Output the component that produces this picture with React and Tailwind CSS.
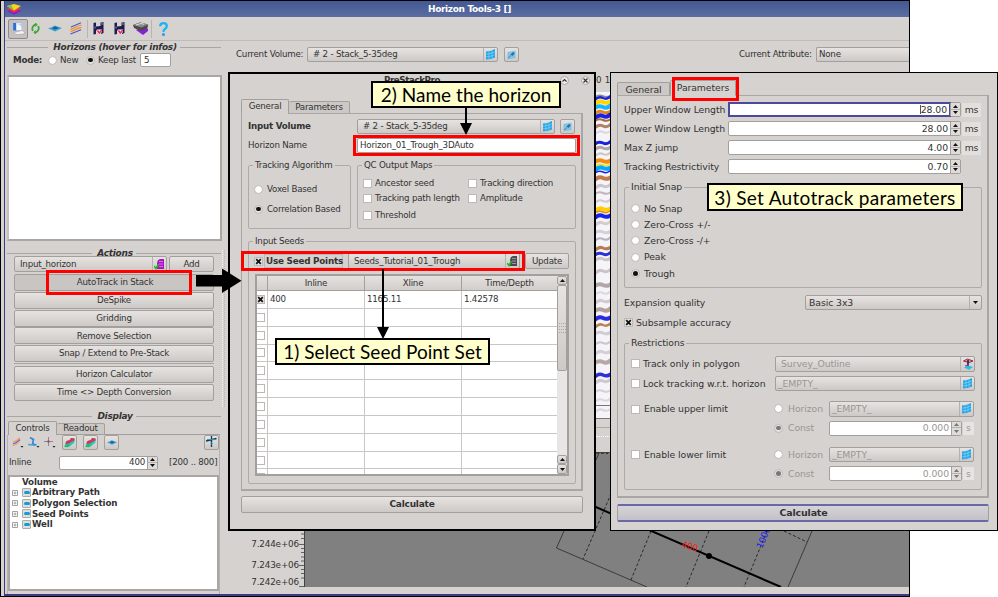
import React from "react";

const cx = (...c) => c.filter(Boolean).join(" ");
const btn = "border border-[#a39f9c] rounded-[2px] bg-gradient-to-b from-[#e6e3e1] to-[#cdc9c6]";

/* ---------- small drawings ---------- */
const Logo = () => (
  <svg width="14" height="13" viewBox="0 0 14 13">
    <path d="M0 8l7-3 7 3-7 4z" fill="#8a22c8" />
    <path d="M0 5.500l7-3 7 3-7 4z" fill="#f03a3a" />
    <path d="M0 3l7-2 7 2-7 4.500z" fill="#f7d51d" />
    <path d="M0 3l4-1.200 3 5.700z" fill="#7cc243" />
  </svg>
);
const ViewIcon = () => (
  <svg width="13" height="13" viewBox="0 0 13 13">
    <path d="M1 0.500h8.500l.5 8H1.500z" fill="#f5f8ff" stroke="#9fb4d8" strokeWidth=".7" />
    <path d="M1.200 1h3v7.500h-3z" fill="#2f6fd0" />
    <path d="M5 1.500h4.500v3z" fill="#b9d2f4" />
    <path d="M2 10.500l8-2 2.500 1.500-.5 2-8 .5z" fill="#f4f4f4" stroke="#a5a5a5" strokeWidth=".6" />
    <path d="M10 3.500l1.500 5" stroke="#c2c8d4" strokeWidth="1.200" />
  </svg>
);
const RefreshIcon = () => (
  <svg width="9" height="11" viewBox="0 0 9 11" fill="none" stroke="#3fa535" strokeWidth="1.800">
    <path d="M1.800 8C.5 5 2 1.500 5.500 1.500M3.500 9.500C7 9.500 8.500 6 7.200 3" />
    <path d="M4 .2L6.200 1.600 4.500 3.500M5 10.800L2.800 9.400 4.500 7.500" strokeWidth="1" />
  </svg>
);
const Surface = ({ w = 14 }) => (
  <svg width={w} height={w * 0.5} viewBox="0 0 14 7">
    <path d="M0 3.300Q4 2.500 6.500.5L14 3 7 6.500z" fill="#3b9fd4" />
    <path d="M4 3.300l3-1.800L11 3 7 4.500z" fill="#145f9c" />
  </svg>
);
const Layers = () => (
  <svg width="12" height="13" viewBox="0 0 12 13" fill="none" strokeWidth="1.200">
    <path d="M1 5L11 .8" stroke="#4b55c9" />
    <path d="M.5 7.300q3-.8 5-2T11.500 3" stroke="#f28b2c" />
    <path d="M.5 9.500q3-.8 5-2T11.500 5.300" stroke="#f28b2c" />
    <path d="M.5 12L11 7.800" stroke="#4b55c9" />
  </svg>
);
const SaveIcon = () => (
  <svg width="11" height="13" viewBox="0 0 11 13">
    <path d="M.5 1l2.500-.5v4L7.500 4V.5l3-.5v11l-2.500 1V8L3 8.500v3.500l-2.500.5z" fill="#1c1a4e" />
    <path d="M9 .5v2.500M2 4.500v2" stroke="#c8c8de" strokeWidth=".7" />
    <path d="M3.800 7.500H9V10l-2.700 2.500L3.800 10z" fill="#f4f4f4" />
    <path d="M4.500 8.500L6.300 11l2.500-3" fill="none" stroke="#f02050" strokeWidth="1.500" />
  </svg>
);
const BoxIcon = () => (
  <svg width="15" height="13" viewBox="0 0 15 13">
    <path d="M3 8l6-3 6 2v2l-5 4z" fill="#8a1fe0" />
    <path d="M0 3l7-2.500 8 2-.5 4L8 9 1 6z" fill="#4a4a4a" />
    <path d="M0 3l7-2.500 8 2L8.500 5.500z" fill="#8b8b8b" />
    <path d="M3 3l5-1.500 3 .8" stroke="#ddd" fill="none" />
  </svg>
);
const HelpIcon = () => (
  <svg width="9" height="14" viewBox="0 0 9 14">
    <path d="M1.200 4.200Q1.200 1.200 4.500 1.200T7.800 4q0 1.800-1.800 2.900t-1.500 3.100" fill="none" stroke="#1cb4f2" strokeWidth="2.300" />
    <circle cx="4.500" cy="12.400" r="1.500" fill="#1c9cf2" />
  </svg>
);
const GridIcon = () => (
  <svg width="9" height="11" viewBox="0 0 9 11">
    <path d="M0 2.500Q4 2.500 9 0v8.500Q5 10.500 0 10.500z" fill="#22a6ea" />
    <path d="M0 5.200Q5 5 9 2.900M0 7.900Q5 7.700 9 5.600M3 2.300v8M6 1.400v8" stroke="#9bd6f5" strokeWidth=".6" fill="none" />
  </svg>
);
const PinIcon = () => (
  <svg width="9" height="10" viewBox="0 0 9 10">
    <path d="M.5 2l8-1.500v7.500l-8 1.500z" fill="#7cc4ea" />
    <path d="M1 8L4 5.500" stroke="#5a7890" strokeWidth=".9" />
    <path d="M3.500 4.500L6 2l1.800 1.300L5.500 6z" fill="#2a6f9c" />
  </svg>
);
const SeedIcon = ({ color }) => (
  <svg width="11" height="12" viewBox="0 0 11 12">
    <path d="M4 2l2-1h4v10H3V5z" fill={color} />
    <path d="M5 3.500h4M5 6h4M5 8.500h4" stroke="#ccc" strokeWidth=".6" />
    <path d="M0 8l2 2.500L4.500 6" fill="none" stroke="#25b52a" strokeWidth="1.600" />
  </svg>
);
const Patch = () => (
  <svg width="11" height="11" viewBox="0 0 11 11">
    <path d="M.5 9l2-5 3-1 2-2 3 .5v4L5 10z" fill="#20c9c8" />
    <path d="M2 4.500l2-1 1.500-.3L7 1l3.500.5v2L8 4.500 5 6.500 1.500 7z" fill="#d8344e" />
    <path d="M0 10l2.500-3 3 .5L4 10.300z" fill="#28b96c" />
  </svg>
);
const Pole = () => (
  <svg width="12" height="12" viewBox="0 0 12 12">
    <path d="M1.500 3l4-2L11 3 7 4.500z" fill="#f0a0b4" stroke="#9e2344" />
    <path d="M6 2v7" stroke="#24365c" strokeWidth="1.800" />
    <path d="M2 9.500l4-2 5 1.500-4 2.700z" fill="#21bee6" />
    <path d="M3 8l4-1.500" stroke="#b83058" />
  </svg>
);
const Rig = () => (
  <svg width="11" height="12" viewBox="0 0 11 12" fill="none">
    <path d="M0 5l10.500-2.500M5.500 0v11" stroke="#17374d" strokeWidth="1.300" />
    <path d="M1 3.500h9M4.500 6l2 1.500-2 1.500" stroke="#2a98c9" strokeWidth=".9" />
  </svg>
);
const Probe = () => (
  <svg width="12" height="11" viewBox="0 0 12 11" fill="none">
    <path d="M2 .5l3.500 2-1 4.500 4 1" stroke="#2f82d8" strokeWidth="1.600" />
    <path d="M0 7.500l7 .8" stroke="#36a7e0" strokeWidth="1.500" />
    <path d="M8.500 9h3L10 10.700z" fill="#222" />
  </svg>
);
const Cross = () => (
  <svg width="12" height="11" viewBox="0 0 12 11">
    <path d="M4.500 0v9M0 4.500h9" stroke="#8a7a92" strokeWidth=".9" />
    <circle cx="4.500" cy="4.500" r="1.200" fill="#a5486a" />
    <path d="M8.500 9h3L10 10.700z" fill="#222" />
  </svg>
);
const MiniLayers = () => (
  <svg width="12" height="11" viewBox="0 0 12 11" fill="none">
    <path d="M1 5q4-1 7-4" stroke="#f29a3c" strokeWidth="1.200" />
    <path d="M1 6.800q4-1 7-4" stroke="#7a5fd0" strokeWidth="1.300" />
    <path d="M.5 8.600q4-1 7-4" stroke="#f0a070" strokeWidth="1.200" />
    <path d="M8.500 9h3L10 10.700z" fill="#222" />
  </svg>
);
const Tri = ({ down, c = "#111" }) => (
  <svg width="5" height="3" viewBox="0 0 5 3" className="shrink-0">
    <path d={down ? "M0 0h5L2.500 3z" : "M0 3h5L2.500 0z"} fill={c} />
  </svg>
);

/* ---------- controls ---------- */
const Radio = ({ on, dim }) => (
  <span className={cx("flex size-[9px] shrink-0 items-center justify-center rounded-full border border-[#bcb8b5]", on ? "bg-[#e6e4e2]" : "bg-white")}>
    {on && <span className={cx("size-[4.500px] rounded-full", dim ? "bg-[#777]" : "bg-[#111]")} />}
  </span>
);
const Check = ({ on }) => (
  <span className={cx("flex size-[9px] shrink-0 items-center justify-center border border-[#bcb8b5]", on ? "bg-[#e6e4e2]" : "bg-white")}>
    {on && (
      <svg width="7" height="7" viewBox="0 0 7 7" className="shrink-0">
        <path d="M1.200 1.200l4.600 4.600M5.800 1.200L1.200 5.800" stroke="#111" strokeWidth="1.800" />
      </svg>
    )}
  </span>
);
const Combo = ({ text, icon, className, dim, pad = "pl-[5px]", iw = "w-[14px]" }) => (
  <div className={cx("flex h-full shrink-0 items-center", btn, className, dim && "text-[#9a9693]")}>
    <span className={cx("flex-1", pad)}>{text}</span>
    {icon && (
      <span className={cx("flex h-full items-center justify-center border-l border-[#b5b1ae]", iw)}>{icon}</span>
    )}
  </div>
);
const Spin = ({ value, className, dim, focus }) => (
  <div
    className={cx(
      "flex h-full shrink-0 rounded-[2px] border border-[#a39f9c] bg-white",
      dim && "text-[#9a9693]",
      className
    )}
  >
    <span
      className={cx(
        "flex flex-1 items-center justify-end pr-[2px]",
        focus && "-m-px border-2 border-[#4a4a9c] pr-[1px]"
      )}
    >
      <span className={focus ? "border-l border-[#555]" : ""}>{value}</span>
    </span>
    <span className="flex w-[10px] flex-col items-center justify-around border-l border-[#a39f9c] bg-[#dedbd8] py-px">
      <Tri c={dim ? "#777" : "#111"} />
      <span className="h-px w-full bg-[#b5b1ae]" />
      <Tri down c={dim ? "#777" : "#111"} />
    </span>
  </div>
);
const Section = ({ children, className }) => (
  <div className={cx("flex w-[214px] shrink-0 items-center gap-[4px] text-[9px] font-bold italic tracking-[-0.27px]", className)}>
    <span className="h-px flex-1 bg-[#aaa6a3]" />
    <span className="relative left-[1px]">{children}</span>
    <span className="h-px flex-1 bg-[#aaa6a3]" />
  </div>
);
const Group = ({ title, className, children }) => (
  <fieldset className={cx("min-w-0 shrink-0 rounded-[2px] border border-[#aeaaa7]", className)}>
    <legend className="ml-[4px] flex h-[10px] items-center px-[2px]">{title}</legend>
    {children}
  </fieldset>
);
const Button = ({ children, className }) => (
  <div className={cx("flex shrink-0 items-center justify-center", btn, className)}>{children}</div>
);
const Callout = ({ children, className }) => (
  <div
    className={cx(
      "absolute flex items-center justify-center border-[2px] border-black bg-[#ffffcc] font-['Lato','Open_Sans',sans-serif] text-[19px] leading-none text-black",
      className
    )}
  >
    {children}
  </div>
);
const Mark = ({ className }) => <div className={cx("absolute border-[3px] border-[#fe0000]", className)} />;

/* ---------- background views ---------- */
const bands = [
  [96, "#8a8a92", 1.5], [98, "#1a22e0", 2.5], [102, "#ffd800", 4], [107, "#15b8ff", 4], [112, "#e88418", 3],
  [116, "#1a22e0", 4], [120, "#a56c40", 2], [126, "#b08268", 3], [132, "#dcd8dc", 2], [143, "#1a22e0", 3],
  [148, "#b0a4a4", 3], [154, "#cfc6c6", 2], [161, "#f28c10", 4], [165, "#ffd800", 1.500], [168, "#00a8ff", 4],
  [172, "#1a22e0", 1.500], [178, "#c07a48", 4], [186, "#cdc5c8", 3], [193, "#c0b6bc", 2], [201, "#d2cad0", 2],
  [209, "#ffd000", 4], [212, "#e8861a", 1.500], [216, "#1225e8", 4], [223, "#d5cccf", 3], [232, "#d5d0d8", 3],
  [239, "#b8b2c2", 2], [248, "#b97a4c", 3], [254, "#2a30dc", 3], [259, "#cfc5c8", 3], [271, "#ccc2c8", 3],
  [285, "#b3a5a5", 4], [293, "#dcd8df", 2], [301, "#d3cad0", 3], [310, "#b5a19a", 4], [318, "#2a2ae0", 4],
  [325, "#bd824c", 2.500], [333, "#d2cbd4", 3], [343, "#cdc5cd", 2], [352, "#d5ced4", 3], [362, "#b9a6a4", 4],
  [375, "#302fd8", 3.500], [381, "#d0c8d0", 3], [391, "#d5cfd8", 2], [400, "#dcd6e0", 2], [410, "#dad5e2", 2],
];
const Seismic = () => (
  <svg width="14" height="327" viewBox="0 92 14 327" className="shrink-0 bg-[#f5f4f8]">
    {bands.map(([y, c, w], i) => (
      <path key={y} d={`M-1 ${y + 1 + (i % 3) * 0.7}Q3 ${y - 2} 7 ${y}T15 ${y - 1 - (i % 2)}`} fill="none" stroke={c} strokeWidth={w} />
    ))}
    <path d="M0 405.500h14M0 418.500h14" stroke="#777" />
  </svg>
);
const ticks = [534, 538.5, 548.5, 552.5, 557, 561, 569.5, 573.5, 578];
const AxisTicks = () => (
  <svg width="5" height="135" viewBox="299 452 5 135" className="shrink-0">
    <path d={"M299 544.5h5M299 565.500h5M299 586.500h5" + ticks.map((y) => `M301 ${y}h3`).join("")} stroke="#444" strokeWidth=".8" />
  </svg>
);
const SurveyMap = () => (
  <svg width="605" height="135" viewBox="304 452 605 135" className="shrink-0 bg-[#808080]">
    <g fill="none" stroke="#2a2a2a">
      <path d="M304.500 452v135M304 452.500h605" stroke="#444" />
      <path d="M596 460l3-7M564 531l-7.500 17L647 587M812 531l-24 56" strokeWidth=".8" />
      <g strokeDasharray="3 2">
        <path d="M629 452L583 559M596 453l12 .5M651 531l-20 49M709 531l-23 56M767 531l-23 56M784 531l23 11" />
      </g>
      <path d="M590 504.500L781 587" stroke="#000" strokeWidth="2" />
    </g>
    <circle cx="709" cy="556" r="3" fill="#000" />
    <text transform="translate(681 547) rotate(16)" fontSize="9" fill="#f02020">400</text>
    <text transform="translate(762 549) rotate(-67)" fontSize="9" fill="#2020f0">1000</text>
  </svg>
);

/* ---------- main window ---------- */
const Sidebar = () => (
  <div className="flex w-[220px] shrink-0 pl-[2px]">
    <div className="flex w-[215px] flex-col">
      <Section className="h-[10px]">Horizons (hover for infos)</Section>
      <div className="flex h-[16px] shrink-0 items-center pl-[6px]">
        <b className="w-[35px]">Mode:</b>
        <Radio />
        <span className="w-[29px] pl-[3px]">New</span>
        <span className="flex w-[12px]"><Radio on /></span>
        <span className="w-[42px]">Keep last</span>
        <span className="flex h-[14px] w-[31px] items-center rounded-[2px] border border-[#a39f9c] bg-white pl-[3px]">5</span>
      </div>
      <div className="mt-[7px] h-[166px] w-[215px] shrink-0 border-2 border-[#aaa6a3] border-l-[#c4c0bd] bg-white" />
      <Section className="mt-[8px] h-[8px]">Actions</Section>
      <div className="-mt-px flex h-[16px] shrink-0 gap-[2px] pl-[7px]">
        <Combo text="Input_horizon" icon={<SeedIcon color="#b010c8" />} className="w-[153px]" />
        <Button className="w-[45px]">Add</Button>
      </div>
      <div className="mt-[2px] flex w-[207px] flex-col gap-[0.8px] pl-[7px]">
        <div className="flex h-[17px] items-center justify-center rounded-[2px] border border-[#a39f9c] bg-[#c9c5c3] pl-[2px]">
          AutoTrack in Stack
        </div>
        <Button className="h-[17px]">DeSpike</Button>
        <Button className="h-[17px]">Gridding</Button>
        <Button className="h-[17px]">Remove Selection</Button>
        <Button className="h-[17px]">Snap / Extend to Pre-Stack</Button>
        <span className="mb-[1px] h-px bg-[#aaa6a3]" />
        <Button className="h-[17px]">Horizon Calculator</Button>
        <Button className="h-[17px]">Time &lt;&gt; Depth Conversion</Button>
      </div>
      <Section className="mt-[12px] h-[8px]">Display</Section>
      <div className="flex h-[14px] shrink-0 items-end pl-[1px]">
        <span className="flex h-[14px] w-[49px] items-center justify-center rounded-t-[2px] border border-b-0 border-[#a39f9c]">Controls</span>
        <span className="flex h-[12px] w-[48px] items-center justify-center rounded-t-[2px] border border-l-0 border-[#a39f9c] bg-[#ccc8c5]">Readout</span>
        <span className="h-px w-[115px] bg-[#a39f9c]" />
      </div>
      <div className="flex w-[213px] flex-1 flex-col border-x border-[#b5b1ae]">
        <div className="flex h-[15px] items-center pl-[4px]">
          <span className="w-[16px]"><MiniLayers /></span>
          <span className="w-[16px]"><Probe /></span>
          <span className="w-[18px]"><Cross /></span>
          <Button className="size-[15px]"><Patch /></Button>
          <Button className="ml-[6px] size-[15px]"><Patch /></Button>
          <Button className="ml-[6px] size-[15px]"><Surface w={10} /></Button>
          <Button className="ml-auto size-[15px]"><Rig /></Button>
        </div>
        <div className="mt-[6px] flex h-[14px] items-center pl-[1px]">
          <span className="w-[50px]">Inline</span>
          <Spin value="400" className="w-[99px]" />
          <span className="ml-[11px]">[200 .. 800]</span>
        </div>
        <div className="mt-[5px] flex h-[116px] flex-col border-2 border-[#aaa6a3] bg-white font-bold tracking-[-0.15px]">
          <span className="flex h-[10.700px] items-center pl-[12px]">Volume</span>
          {["Arbitrary Path", "Polygon Selection", "Seed Points", "Well"].map((t) => (
            <span key={t} className="flex h-[10.700px] items-center pl-[2px]">
              <svg width="6" height="6" viewBox="0 0 6 6"><path d="M.5.5h5v5h-5zM1.500 3h3M3 1.500v3" fill="none" stroke="#8a8a8a" strokeWidth=".8" /></svg>
              <span className="mr-[1px] ml-[4px] flex size-[9px] items-center justify-center rounded-[1px] border border-[#aaa] bg-[#dedede]">
                <span className="h-[3px] w-[6px] rounded-full bg-[#159bd6]" />
              </span>
              {t}
            </span>
          ))}
        </div>
      </div>
    </div>
    <span className="mt-[208px] h-[157px] w-[3px] border-x border-dotted border-x-[#f4f2f0] border-r-[#b9b5b2]" />
  </div>
);

const MainWindow = () => (
  <div className="absolute top-0 left-0 flex h-[597px] w-[910px] flex-col border border-black bg-[#d6d2d0] pl-[3px]">
    <div className="flex flex-1 flex-col border-b-2 border-l-[1.500px] border-[#3d3b86]">
      <div className="flex h-[16px] shrink-0 items-center bg-gradient-to-b from-[#435891] to-[#5b6da2] pl-[2px]">
        <Logo />
        <span className="flex-1 pl-[9px] text-center text-[9px] font-bold text-white tracking-[-0.35px]">Horizon Tools-3 []</span>
      </div>
      <div className="flex h-[24px] shrink-0 items-center border-b border-[#bfbbb8] pl-[3px]">
        <span className="flex size-[20px] items-center justify-center rounded-[2px] border border-[#8f8b88] bg-[#c5c1be]"><ViewIcon /></span>
        <span className="ml-[3px]"><RefreshIcon /></span>
        <span className="ml-[8px]"><Surface /></span>
        <span className="ml-[8px]"><Layers /></span>
        <span className="ml-[5px] h-[18px] w-px bg-[#b8b4b1]" />
        <span className="ml-[5px]"><SaveIcon /></span>
        <span className="ml-[10px]"><SaveIcon /></span>
        <span className="ml-[8px]"><BoxIcon /></span>
        <span className="ml-[3px] h-[18px] w-px bg-[#b8b4b1]" />
        <span className="ml-[7px]"><HelpIcon /></span>
      </div>
      <div className="mt-px flex flex-1">
        <Sidebar />
        <div className="flex flex-1 flex-col">
          <div className="mt-[5px] flex h-[15px] items-center pl-[11px]">
            <span className="w-[71px]">Current Volume:</span>
            <Combo text="# 2 - Stack_5-35deg" icon={<GridIcon />} className="w-[191px]" />
            <Button className="ml-[6px] size-[15px]"><PinIcon /></Button>
            <span className="ml-[220px] w-[77px]">Current Attribute:</span>
            <div className="flex h-full flex-1 items-center rounded-l-[2px] border border-r-0 border-[#a39f9c] bg-gradient-to-b from-[#e6e3e1] to-[#cdc9c6] pl-[2px]">None</div>
          </div>
          <div className="mt-[10px] flex h-[20px] items-start justify-between pt-[4px] pr-[299px] pl-[371px]">
            <span>0</span><span>1</span>
          </div>
          <div className="flex pl-[371px]"><Seismic /></div>
          <div className="ml-[371px] h-[9px] w-[14px] border-b border-[#aaa]" />
          <div className="mt-[8px] ml-[371px] h-px w-[14px] border-t border-dotted border-white" />
          <div className="mt-[15px] flex">
            <div className="flex w-[74px] shrink-0 flex-col items-end pt-[86px] text-[8.800px] tracking-[-0.15px]">
              <span className="flex h-[12px] items-center">7.244e+06</span>
              <span className="mt-[9px] flex h-[12px] items-center">7.243e+06</span>
              <span className="mt-[5px] flex h-[12px] items-center">7.242e+06</span>
            </div>
            <AxisTicks />
            <SurveyMap />
          </div>
        </div>
      </div>
    </div>
  </div>
);

/* ---------- PreStackPro, General tab ---------- */
const GeneralDialog = () => (
  <div className="absolute top-[72px] left-[228px] flex h-[459px] w-[368px] flex-col border-2 border-black bg-[#d6d2d0] pl-[11px]">
    <div className="flex h-[12px] items-center">
      <span className="w-[342px] text-center font-bold tracking-[-0.4px]">PreStackPro</span>
    </div>
    <div className="-mt-[10px] flex h-[9px] justify-end gap-[12px] pr-[4px]">
      {["M2.500 5.500L4.500 3.500 6.500 5.500", "M2.500 2.500l4 4M6.500 2.500l-4 4"].map((d) => (
        <svg key={d} width="9" height="9" viewBox="0 0 9 9"><circle cx="4.500" cy="4.500" r="4" fill="#eceae8" stroke="#aaa" /><path d={d} stroke="#333" fill="none" strokeWidth="1.100" /></svg>
      ))}
    </div>
    <div className="mt-[14px] flex h-[14px] shrink-0 items-end">
      <span className="flex h-[14px] w-[48px] items-center justify-center rounded-t-[2px] border border-b-0 border-[#a39f9c]">General</span>
      <span className="flex h-[12px] w-[61px] items-center justify-center rounded-t-[2px] border border-b-0 border-l-0 border-[#a39f9c] bg-[#ccc8c5]">Parameters</span>
    </div>
    <div className="flex h-px w-[342px] shrink-0 border-l border-[#aaa6a3] pl-[46px]"><span className="h-px flex-1 bg-[#aaa6a3]" /></div>
    <div className="-mt-px flex h-[378px] w-[342px] shrink-0 flex-col border border-t-0 border-r-2 border-b-2 border-[#aaa6a3] pt-[6px] pl-[6px]">
      <div className="flex h-[15px] shrink-0 items-center">
        <b className="w-[109px]">Input Volume</b>
        <Combo text="# 2 - Stack_5-35deg" icon={<GridIcon />} className="w-[198px]" />
        <Button className="ml-[5px] size-[15px]"><PinIcon /></Button>
      </div>
      <div className="mt-[4px] flex h-[15px] shrink-0 items-center">
        <span className="w-[109px]">Horizon Name</span>
        <span className="flex h-full w-[219px] items-center rounded-[2px] border border-[#a39f9c] bg-white pl-[2px]">Horizon_01_Trough_3DAuto</span>
      </div>
      <div className="mt-[7px] flex gap-[6px]">
        <Group title="Tracking Algorithm" className="h-[69px] w-[103px]">
          <div className="mt-[13px] flex h-[12px] items-center gap-[4px] pl-[5px]"><Radio />Voxel Based</div>
          <div className="mt-[8px] flex h-[12px] items-center gap-[4px] pl-[5px]"><Radio on />Correlation Based</div>
        </Group>
        <Group title="QC Output Maps" className="h-[69px] w-[219px]">
          <div className="mt-[7px] flex h-[13px] items-center gap-[3px] pl-[5px]"><Check /><span className="w-[90px]">Ancestor seed</span><Check />Tracking direction</div>
          <div className="mt-[2px] flex h-[13px] items-center gap-[3px] pl-[5px]"><Check /><span className="w-[90px]">Tracking path length</span><Check />Amplitude</div>
          <div className="mt-[4px] flex h-[13px] items-center gap-[3px] pl-[5px]"><Check />Threshold</div>
        </Group>
      </div>
      <Group title="Input Seeds" className="mt-[7px] h-[248px] w-[328px]">
        <div className="mt-[7px] flex h-[16px] items-center pl-[5px]">
          <Check on />
          <b className="ml-[1px] flex h-[14px] w-[79px] items-center border border-[#bbb7b4] pl-[1px] text-[8.800px] tracking-[-0.22px]">Use Seed Points</b>
          <Combo text="Seeds_Tutorial_01_Trough" icon={<SeedIcon color="#4a4a52" />} className="ml-[5px] w-[172px]" />
          <Button className="ml-[5px] h-[16px] w-[44px]">Update</Button>
        </div>
        <div className="mt-[5px] ml-[6px] flex h-[202px] w-[314px] border-2 border-[#a39f9c] bg-white">
          <div className="flex flex-1 flex-col overflow-hidden">
            <div className="grid h-[15px] shrink-0 grid-cols-[11px_97px_97px_96px] bg-gradient-to-b from-[#e4e1df] to-[#d0ccc9]">
              {["", "Inline", "Xline", "Time/Depth"].map((t) => (
                <span key={t} className="flex items-center justify-center border-r border-b border-[#a39f9c]">{t}</span>
              ))}
            </div>
            {Array.from({ length: 11 }, (_, i) => (
              <div key={i} className="grid h-[17.850px] shrink-0 grid-cols-[11px_97px_97px_96px]">
                <span className="-ml-px flex items-center border-r border-b border-[#c9c7c5]"><Check on={i === 0} /></span>
                {(i === 0 ? ["400", "1165.11", "1.42578"] : ["", "", ""]).map((t, j) => (
                  <span key={j} className="flex items-center border-r border-b border-[#c9c7c5] pl-[2px]">{t}</span>
                ))}
              </div>
            ))}
          </div>
          <div className="flex w-[10px] flex-col bg-[#e8e6e4]">
            <Button className="h-[9px]"><Tri /></Button>
            <Button className="h-[86px]">
              <svg width="7" height="12" viewBox="0 0 7 12"><path d="M0 1.500h7M0 4.500h7M0 7.500h7M0 10.500h7" stroke="#aaa6a3" strokeDasharray="1 1" /></svg>
            </Button>
            <Button className="mt-auto h-[9px]"><Tri /></Button>
            <Button className="h-[10px]"><Tri down /></Button>
          </div>
        </div>
      </Group>
    </div>
    <Button className="mt-[5px] h-[17px] w-[342px] text-[9px] font-bold">Calculate</Button>
  </div>
);

/* ---------- PreStackPro, Parameters tab ---------- */
const Limit = ({ label, className }) => (
  <div className={cx("flex pl-[6px]", className)}>
    <div className="flex h-[16px] w-[143px] items-center gap-[4px]"><Check />{label}</div>
    <div className="flex flex-col gap-[4px] text-[#9a9693]">
      <div className="flex h-[15.500px] items-center"><Radio /><span className="w-[46px] pl-[5px]">Horizon</span><Combo dim text="_EMPTY_" pad="pl-[2px]" icon={<GridIcon />} className="w-[145px]" /></div>
      <div className="flex h-[15px] items-center"><Radio on dim /><span className="w-[46px] pl-[5px]">Const</span><Spin dim value="0.000" className="w-[133px]" /><span className="ml-px flex h-[13px] w-[11px] items-center justify-center bg-[#e6e4e2]">s</span></div>
    </div>
  </div>
);
const ParametersDialog = () => (
  <div className="absolute top-[72px] left-[610px] flex h-[459px] w-[388px] flex-col border border-black bg-[#d6d2d0] pt-[7px] pl-[6px] text-[9.300px] tracking-[-0.08px]">
    <div className="flex h-[15px] shrink-0 items-end">
      <span className="flex h-[13px] w-[53px] items-center justify-center rounded-t-[2px] border border-b-0 border-[#a39f9c] bg-[#ccc8c5] pt-px">General</span>
      <span className="flex h-[15px] w-[66px] items-center justify-center rounded-t-[2px] border border-b-0 border-[#a39f9c]">Parameters</span>
    </div>
    <div className="flex h-px w-[372px] shrink-0 gap-[64px] bg-[#d6d2d0]"><span className="w-[54px] bg-[#aaa6a3]" /><span className="flex-1 bg-[#aaa6a3]" /></div>
    <div className="flex h-[402px] w-[372px] shrink-0 flex-col border border-t-0 border-r-2 border-b-2 border-[#aaa6a3] pt-[6px] pl-[6px]">
      <div className="flex flex-col gap-[4px]">
        {[["Upper Window Length", "28.00", 1], ["Lower Window Length", "28.00", 1], ["Max Z jump", "4.00", 1], ["Tracking Restrictivity", "0.70", 0]].map(([l, v, u], i) => (
          <div key={l} className="flex h-[15px] items-center">
            <span className="w-[104px]">{l}</span>
            <Spin value={v} focus={i === 0} className="w-[233px]" />
            {u === 1 && <span className="ml-px flex h-[14px] w-[19px] items-center justify-center bg-[#e2dfdd]">ms</span>}
          </div>
        ))}
      </div>
      <Group title="Initial Snap" className="mt-[8px] h-[106px] w-[358px]">
        <div className="mt-[8px] flex flex-col">
          {["No Snap", "Zero-Cross +/-", "Zero-Cross -/+", "Peak", "Trough"].map((t) => (
            <div key={t} className="flex h-[16.300px] items-center gap-[4px] pl-[6px]"><Radio on={t === "Trough"} />{t}</div>
          ))}
        </div>
      </Group>
      <div className="mt-[7px] flex h-[15px] shrink-0 items-center">
        <span className="w-[181px]">Expansion quality</span>
        <Combo text="Basic 3x3" pad="pl-[3px]" iw="w-[12px]" icon={<Tri down />} className="w-[177px]" />
      </div>
      <div className="mt-[6px] flex h-[13px] shrink-0 items-center gap-[3px]"><Check on />Subsample accuracy</div>
      <Group title="Restrictions" className="mt-[9px] h-[152px] w-[358px]">
        <div className="mt-[8px] flex h-[16px] items-center pl-[6px]">
          <span className="flex w-[144px] items-center gap-[3px]"><Check />Track only in polygon</span>
          <Combo dim text="Survey_Outline" icon={<Pole />} className="w-[200px]" />
        </div>
        <div className="mt-[3.500px] flex h-[15.500px] items-center pl-[6px]">
          <span className="flex w-[144px] items-center gap-[3px]"><Check />Lock tracking w.r.t. horizon</span>
          <Combo dim text="_EMPTY_" pad="pl-[2px]" icon={<GridIcon />} className="w-[200px]" />
        </div>
        <Limit label="Enable upper limit" className="mt-[10px]" />
        <Limit label="Enable lower limit" className="mt-[11px]" />
      </Group>
    </div>
    <div className="mt-[6px] flex h-[18px] w-[372px] items-center justify-center rounded-[2px] border border-y-2 border-[#6a69a8] border-x-[#a39f9c] bg-gradient-to-b from-[#d6d3d8] to-[#c3c0c8] pl-[1px] text-[9.500px] font-bold tracking-[-0.2px]">Calculate</div>
  </div>
);

export default function App() {
  return (
    <div className="relative h-[597px] w-[998px] overflow-hidden bg-white font-['DejaVu_Sans',sans-serif] text-[8.700px] leading-none tracking-[-0.22px] whitespace-nowrap text-[#333]">
      <MainWindow />
      <GeneralDialog />
      <ParametersDialog />

      <Mark className="top-[270px] left-[46px] h-[25px] w-[146px]" />
      <Mark className="top-[135px] left-[353px] h-[21px] w-[227px]" />
      <Mark className="top-[251px] left-[241px] h-[20px] w-[284px]" />
      <Mark className="top-[77px] left-[672px] h-[24px] w-[67px]" />

      <Callout className="top-[81px] left-[371px] h-[27px] w-[190px] tracking-[0.03px]">2) Name the horizon</Callout>
      <Callout className="top-[338px] left-[275px] h-[27px] w-[215px] tracking-[0.03px]">1) Select Seed Point Set</Callout>
      <Callout className="top-[183px] left-[707px] h-[28px] w-[256px] tracking-[0.3px]">3) Set Autotrack parameters</Callout>

      <svg className="absolute top-[268px] left-[196px]" width="46" height="26" viewBox="0 0 46 26">
        <path d="M0 7h26V0.500L45.500 12.700 26 25V18.500H0z" />
      </svg>
      <svg className="absolute top-[108px] left-[460px]" width="12" height="27" viewBox="0 0 12 27">
        <path d="M5 0h2v15h5L6 27 0 15h5z" />
      </svg>
      <svg className="absolute top-[269px] left-[377px]" width="12" height="70" viewBox="0 0 12 70">
        <path d="M5 0h2v58h5L6 70 0 58h5z" />
      </svg>
    </div>
  );
}
